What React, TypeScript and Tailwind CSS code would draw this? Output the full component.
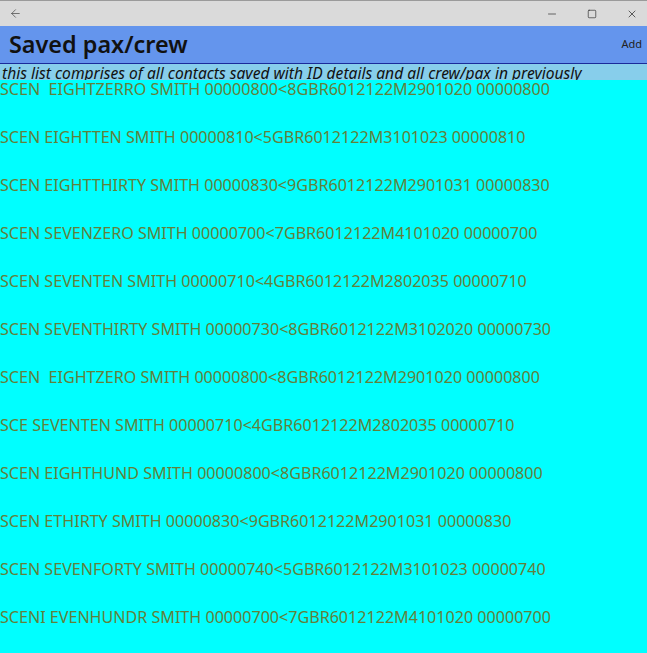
import { ArrowLeft, Minus, Square, X } from "lucide-react";

const rows = [
  "SCEN  EIGHTZERRO SMITH 00000800<8GBR6012122M2901020 00000800",
  "SCEN EIGHTTEN SMITH 00000810<5GBR6012122M3101023 00000810",
  "SCEN EIGHTTHIRTY SMITH 00000830<9GBR6012122M2901031 00000830",
  "SCEN SEVENZERO SMITH 00000700<7GBR6012122M4101020 00000700",
  "SCEN SEVENTEN SMITH 00000710<4GBR6012122M2802035 00000710",
  "SCEN SEVENTHIRTY SMITH 00000730<8GBR6012122M3102020 00000730",
  "SCEN  EIGHTZERO SMITH 00000800<8GBR6012122M2901020 00000800",
  "SCE SEVENTEN SMITH 00000710<4GBR6012122M2802035 00000710",
  "SCEN EIGHTHUND SMITH 00000800<8GBR6012122M2901020 00000800",
  "SCEN ETHIRTY SMITH 00000830<9GBR6012122M2901031 00000830",
  "SCEN SEVENFORTY SMITH 00000740<5GBR6012122M3101023 00000740",
  "SCENI EVENHUNDR SMITH 00000700<7GBR6012122M4101020 00000700",
];

export default function App() {
  return (
    <div
      className="w-[647px] h-[653px] overflow-hidden flex flex-col bg-[#00ffff]"
      style={{ fontFamily: "'Noto Sans', 'Open Sans', sans-serif" }}
    >
      {/* title bar */}
      <div className="h-[26px] shrink-0 bg-[#dadada] border-t border-[#9a9a9a] flex items-center">
        <button className="w-[30px] h-full flex items-center justify-center text-[#444]">
          <ArrowLeft className="w-[13px] h-[13px]" strokeWidth={1.3} />
        </button>
        <div className="flex-1" />
        <div className="flex items-center gap-[28px] pr-[9px] text-[#222]">
          <Minus className="w-[12px] h-[12px]" strokeWidth={1.3} />
          <Square className="w-[12px] h-[12px] p-[1px]" strokeWidth={1.5} />
          <X className="w-[12px] h-[12px]" strokeWidth={1.4} />
        </div>
      </div>

      {/* header */}
      <div className="h-[38px] shrink-0 bg-[#6495ed] border-b border-[#1a2b9a] flex items-center justify-between pl-[9px] pr-[5px]">
        <h1 className="text-[23.4px] font-semibold text-[#111] leading-none">Saved pax/crew</h1>
        <span className="text-[11px] text-[#222]">Add</span>
      </div>

      {/* description */}
      <div className="h-[16px] shrink-0 bg-[#87ceeb] overflow-hidden pl-[2px]">
        <p className="text-[15.6px] italic text-[#111] leading-[18px] whitespace-nowrap">
          this list comprises of all contacts saved with ID details and all crew/pax in previously
        </p>
      </div>

      {/* list */}
      <div className="flex flex-col">
        {rows.map((r, i) => (
          <div key={i} className="h-[48px] shrink-0">
            <div className="text-[16.1px] leading-[18px] text-[#62803a] whitespace-pre">{r}</div>
          </div>
        ))}
      </div>
    </div>
  );
}
